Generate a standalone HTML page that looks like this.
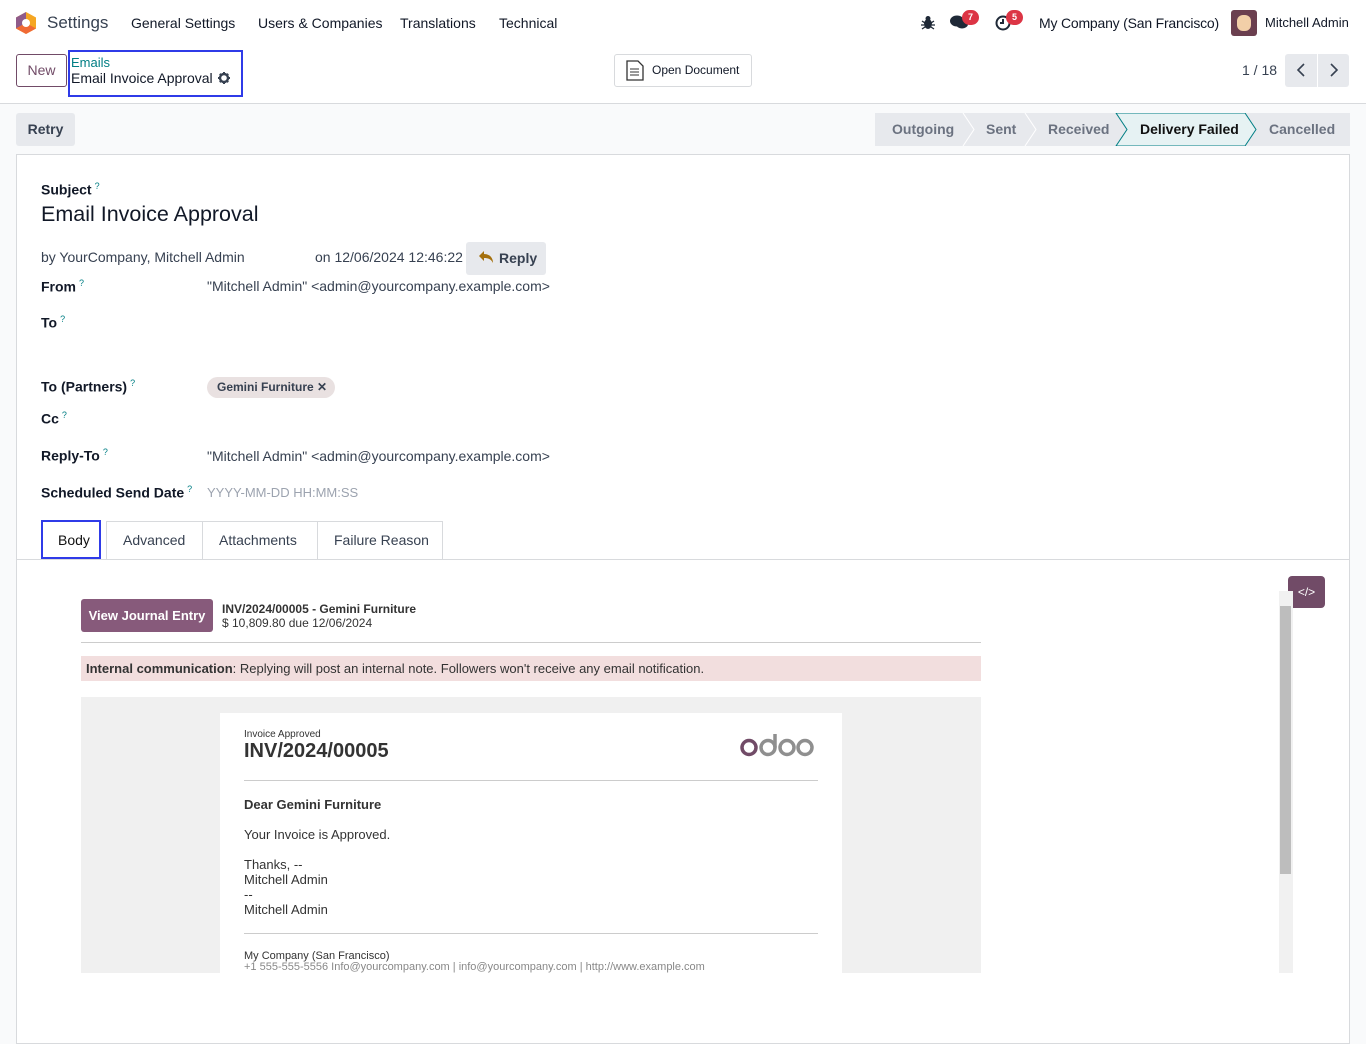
<!DOCTYPE html>
<html><head><meta charset="utf-8"><style>
*{box-sizing:border-box;margin:0;padding:0}
body{width:1366px;height:1036px;overflow:hidden;background:#f9fafb;font-family:"Liberation Sans",sans-serif;color:#374151;position:relative;font-size:14px}
.a{position:absolute;white-space:nowrap}
.top{position:absolute;left:0;top:0;width:1366px;height:104px;background:#fff;border-bottom:1px solid #d8dadd}
.lbl{font-weight:bold;color:#111827;font-size:14px}
.lbl sup{color:#017e84;font-size:9px;font-weight:normal;margin-left:3px}
.mail{font-family:"Liberation Sans",sans-serif;color:#333}
</style></head><body>
<div class="top">
<svg class="a" style="left:16px;top:12px" width="20" height="22" viewBox="0 0 20 22"><polygon points="10,0 20,5.5 20,16.5 10,22 0,16.5 0,5.5" fill="#f5a623"/><polygon points="0,5.5 10,0 10,11 0,16.5" fill="#8f5b8a"/><polygon points="0,16.5 10,11 20,16.5 10,22" fill="#f06a35"/><circle cx="10" cy="11" r="4" fill="#fff"/></svg>
<div class="a" style="left:47px;top:13px;font-size:17px;color:#374151">Settings</div>
<div class="a" style="left:131px;top:15px;font-size:14px;color:#111827">General Settings</div>
<div class="a" style="left:258px;top:15px;font-size:14px;color:#111827">Users &amp; Companies</div>
<div class="a" style="left:400px;top:15px;font-size:14px;color:#111827">Translations</div>
<div class="a" style="left:499px;top:15px;font-size:14px;color:#111827">Technical</div>
<svg class="a" style="left:921px;top:15px" width="14" height="15"><ellipse cx="7" cy="9" rx="4" ry="5" fill="#1f2937"/><circle cx="7" cy="3.5" r="2.5" fill="#1f2937"/><path d="M1 6l3 2M13 6l-3 2M0 10h3M14 10h-3M1 14l3-2M13 14l-3-2" stroke="#1f2937" stroke-width="1.3"/></svg>
<svg class="a" style="left:949px;top:14px" width="20" height="16"><ellipse cx="8" cy="7" rx="7" ry="5.5" fill="#1f2937"/><ellipse cx="13" cy="10" rx="6" ry="4.5" fill="#1f2937"/></svg>
<div class="a" style="left:962px;top:10px;width:17px;height:15px;border-radius:8px;background:#dc3545;color:#fff;font-size:9px;font-weight:bold;text-align:center;line-height:15px">7</div>
<svg class="a" style="left:995px;top:15px" width="16" height="16"><circle cx="8" cy="8" r="6.5" fill="none" stroke="#1f2937" stroke-width="2"/><path d="M8 4v4h-3" stroke="#1f2937" stroke-width="2" fill="none"/></svg>
<div class="a" style="left:1006px;top:10px;width:17px;height:15px;border-radius:8px;background:#dc3545;color:#fff;font-size:9px;font-weight:bold;text-align:center;line-height:15px">5</div>
<div class="a" style="left:1039px;top:15px;font-size:14px;color:#111827;letter-spacing:-0.2px">My Company (San Francisco)</div>
<div class="a" style="left:1231px;top:10px;width:26px;height:26px;border-radius:3px;background:#6b3f4f"><div style="margin:5px 0 0 6px;width:14px;height:16px;border-radius:6px;background:#f2cfa8"></div></div>
<div class="a" style="left:1265px;top:15px;font-size:13px;color:#111827">Mitchell Admin</div>

<div class="a" style="left:16px;top:54px;width:51px;height:33px;border:1px solid #714b67;border-radius:3px;color:#714b67;text-align:center;line-height:31px;font-size:14px">New</div>
<div class="a" style="left:68px;top:50px;width:175px;height:47px;border:2px solid #2f3be8"></div>
<div class="a" style="left:71px;top:55px;font-size:13px;color:#017e84">Emails</div>
<div class="a" style="left:71px;top:70px;font-size:14px;color:#111827">Email Invoice Approval</div>
<svg class="a" style="left:218px;top:72px" width="12" height="12" viewBox="0 0 12 12"><circle cx="6" cy="6" r="4" fill="none" stroke="#374151" stroke-width="2.4"/><path d="M6 0v2.5M6 9.5V12M0 6h2.5M9.5 6H12M1.8 1.8l1.8 1.8M8.4 8.4l1.8 1.8M1.8 10.2l1.8-1.8M8.4 3.6l1.8-1.8" stroke="#374151" stroke-width="2"/></svg>
<div class="a" style="left:614px;top:54px;width:138px;height:33px;border:1px solid #d8dadd;border-radius:3px;background:#fff;font-size:12px;color:#111827;line-height:31px;padding-left:37px">Open Document</div>
<svg class="a" style="left:626px;top:60px" width="18" height="21"><path d="M1 1h11l5 5v14H1z" fill="none" stroke="#333" stroke-width="1.3"/><path d="M4 9h9M4 12h9M4 15h9" stroke="#333"/></svg>
<div class="a" style="left:1242px;top:62px;font-size:14px;color:#374151">1 / 18</div>
<div class="a" style="left:1285px;top:54px;width:64px;height:33px;background:#e7e9ed;border-radius:3px"></div>
<div class="a" style="left:1317px;top:54px;width:1px;height:33px;background:#fff"></div>
<svg class="a" style="left:1295px;top:62px" width="12" height="16"><path d="M9 2L3 8l6 6" stroke="#374151" stroke-width="1.6" fill="none"/></svg>
<svg class="a" style="left:1328px;top:62px" width="12" height="16"><path d="M3 2l6 6-6 6" stroke="#374151" stroke-width="1.6" fill="none"/></svg>
</div>

<div class="a" style="left:16px;top:113px;width:59px;height:33px;background:#e7e9ed;border-radius:3px;text-align:center;line-height:33px;font-weight:bold;color:#374151">Retry</div>
<svg class="a" style="left:875px;top:113px" width="475" height="33">
<rect x="0" y="0" width="475" height="33" fill="#e7e9ed"/>
<polygon points="241,0 370,0 381,16.5 370,33 241,33 252,16.5" fill="#e6f2f3" stroke="#017e84" stroke-width="1"/>
<path d="M88,0 L99,16.5 L88,33 M150,0 L161,16.5 L150,33" stroke="#fff" fill="none" stroke-width="1"/>
</svg>
<div class="a" style="left:892px;top:121px;font-size:14px;font-weight:bold;color:#6b7280">Outgoing</div>
<div class="a" style="left:986px;top:121px;font-size:14px;font-weight:bold;color:#6b7280">Sent</div>
<div class="a" style="left:1048px;top:121px;font-size:14px;font-weight:bold;color:#6b7280">Received</div>
<div class="a" style="left:1140px;top:121px;font-size:14px;font-weight:bold;color:#111">Delivery Failed</div>
<div class="a" style="left:1269px;top:121px;font-size:14px;font-weight:bold;color:#6b7280">Cancelled</div>

<div class="a" style="left:16px;top:154px;width:1334px;height:890px;background:#fff;border:1px solid #d8dadd"></div>
<div class="a lbl" style="left:41px;top:181px">Subject<sup>?</sup></div>
<div class="a" style="left:41px;top:202px;font-size:21.5px;color:#111827">Email Invoice Approval</div>
<div class="a" style="left:41px;top:249px;font-size:14px">by YourCompany, Mitchell Admin</div>
<div class="a" style="left:315px;top:249px;font-size:14px">on 12/06/2024 12:46:22</div>
<div class="a" style="left:466px;top:242px;width:80px;height:33px;background:#e7e9ed;border-radius:3px;font-weight:bold;line-height:33px;padding-left:33px;color:#374151">Reply</div>
<svg class="a" style="left:478px;top:250px" width="16" height="14"><path d="M6 1L1 6l5 5V8c4 0 7 1 9 5 0-5-3-9-9-9z" fill="#a4700d"/></svg>
<div class="a lbl" style="left:41px;top:278px">From<sup>?</sup></div>
<div class="a" style="left:207px;top:278px">"Mitchell Admin" &lt;admin@yourcompany.example.com&gt;</div>
<div class="a lbl" style="left:41px;top:314px">To<sup>?</sup></div>
<div class="a lbl" style="left:41px;top:378px">To (Partners)<sup>?</sup></div>
<div class="a" style="left:207px;top:377px;width:128px;height:21px;border-radius:11px;background:#e9e1e1;font-size:12px;font-weight:bold;color:#374151;line-height:21px;padding-left:10px">Gemini Furniture ✕</div>
<div class="a lbl" style="left:41px;top:410px">Cc<sup>?</sup></div>
<div class="a lbl" style="left:41px;top:447px">Reply-To<sup>?</sup></div>
<div class="a" style="left:207px;top:448px">"Mitchell Admin" &lt;admin@yourcompany.example.com&gt;</div>
<div class="a lbl" style="left:41px;top:484px">Scheduled Send Date<sup>?</sup></div>
<div class="a" style="left:207px;top:485px;color:#9ca3af;font-size:13px">YYYY-MM-DD HH:MM:SS</div>

<div class="a" style="left:17px;top:559px;width:1332px;height:1px;background:#d8dadd"></div>
<div class="a" style="left:106px;top:521px;width:337px;height:39px;border:1px solid #d8dadd;border-bottom:none"></div>
<div class="a" style="left:202px;top:521px;width:1px;height:38px;background:#d8dadd"></div>
<div class="a" style="left:317px;top:521px;width:1px;height:38px;background:#d8dadd"></div>
<div class="a" style="left:41px;top:520px;width:60px;height:39px;border:2px solid #2f3be8;background:#fff"></div>
<div class="a" style="left:58px;top:532px;color:#111">Body</div>
<div class="a" style="left:123px;top:532px">Advanced</div>
<div class="a" style="left:219px;top:532px">Attachments</div>
<div class="a" style="left:334px;top:532px">Failure Reason</div>

<div class="a" style="left:1288px;top:576px;width:37px;height:32px;background:#714b67;border-radius:4px;color:#fff;font-size:12px;text-align:center;line-height:32px">&lt;/&gt;</div>
<div class="a" style="left:1279px;top:591px;width:14px;height:382px;background:#f1f1f1"></div>
<div class="a" style="left:1280px;top:606px;width:11px;height:268px;background:#bdbdbd"></div>

<div class="a mail" style="left:81px;top:599px;width:132px;height:33px;background:#875a7b;border-radius:3px;color:#fff;font-weight:bold;font-size:13px;text-align:center;line-height:33px">View Journal Entry</div>
<div class="a mail" style="left:222px;top:602px;font-size:12px;font-weight:bold">INV/2024/00005 - Gemini Furniture</div>
<div class="a mail" style="left:222px;top:616px;font-size:12px">$ 10,809.80 due 12/06/2024</div>
<div class="a" style="left:81px;top:642px;width:900px;height:1px;background:#ccc"></div>
<div class="a mail" style="left:81px;top:656px;width:900px;height:25px;background:#f2dede;font-size:13px;line-height:25px;padding-left:5px"><b>Internal communication</b>: Replying will post an internal note. Followers won't receive any email notification.</div>
<div class="a" style="left:81px;top:697px;width:900px;height:276px;background:#f0f0f0"></div>
<div class="a" style="left:220px;top:713px;width:622px;height:260px;background:#fff"></div>
<div class="a mail" style="left:244px;top:729px;font-size:10px">Invoice Approved</div>
<div class="a mail" style="left:244px;top:740px;font-size:20px;font-weight:bold">INV/2024/00005</div>
<svg class="a" style="left:740px;top:732px" width="76" height="26" viewBox="0 0 76 26"><circle cx="9" cy="15.5" r="7" fill="none" stroke="#714b67" stroke-width="3.5"/><circle cx="28" cy="15.5" r="7" fill="none" stroke="#8f8f8f" stroke-width="3.5"/><path d="M35 15.5V2" stroke="#8f8f8f" stroke-width="3.5"/><circle cx="47" cy="15.5" r="7" fill="none" stroke="#8f8f8f" stroke-width="3.5"/><circle cx="65" cy="15.5" r="7" fill="none" stroke="#8f8f8f" stroke-width="3.5"/></svg>
<div class="a" style="left:244px;top:780px;width:574px;height:1px;background:#ccc"></div>
<div class="a mail" style="left:244px;top:797px;font-size:13px;font-weight:bold">Dear Gemini Furniture</div>
<div class="a mail" style="left:244px;top:827px;font-size:13px">Your Invoice is Approved.</div>
<div class="a mail" style="left:244px;top:857px;font-size:13px;line-height:15px">Thanks, --<br>Mitchell Admin<br>--<br>Mitchell Admin</div>
<div class="a" style="left:244px;top:933px;width:574px;height:1px;background:#ccc"></div>
<div class="a mail" style="left:244px;top:950px;font-size:11px">My Company (San Francisco)</div>
<div class="a mail" style="left:244px;top:961px;font-size:11px;color:#888">+1 555-555-5556 Info@yourcompany.com | info@yourcompany.com | http://www.example.com</div>
</body></html>
